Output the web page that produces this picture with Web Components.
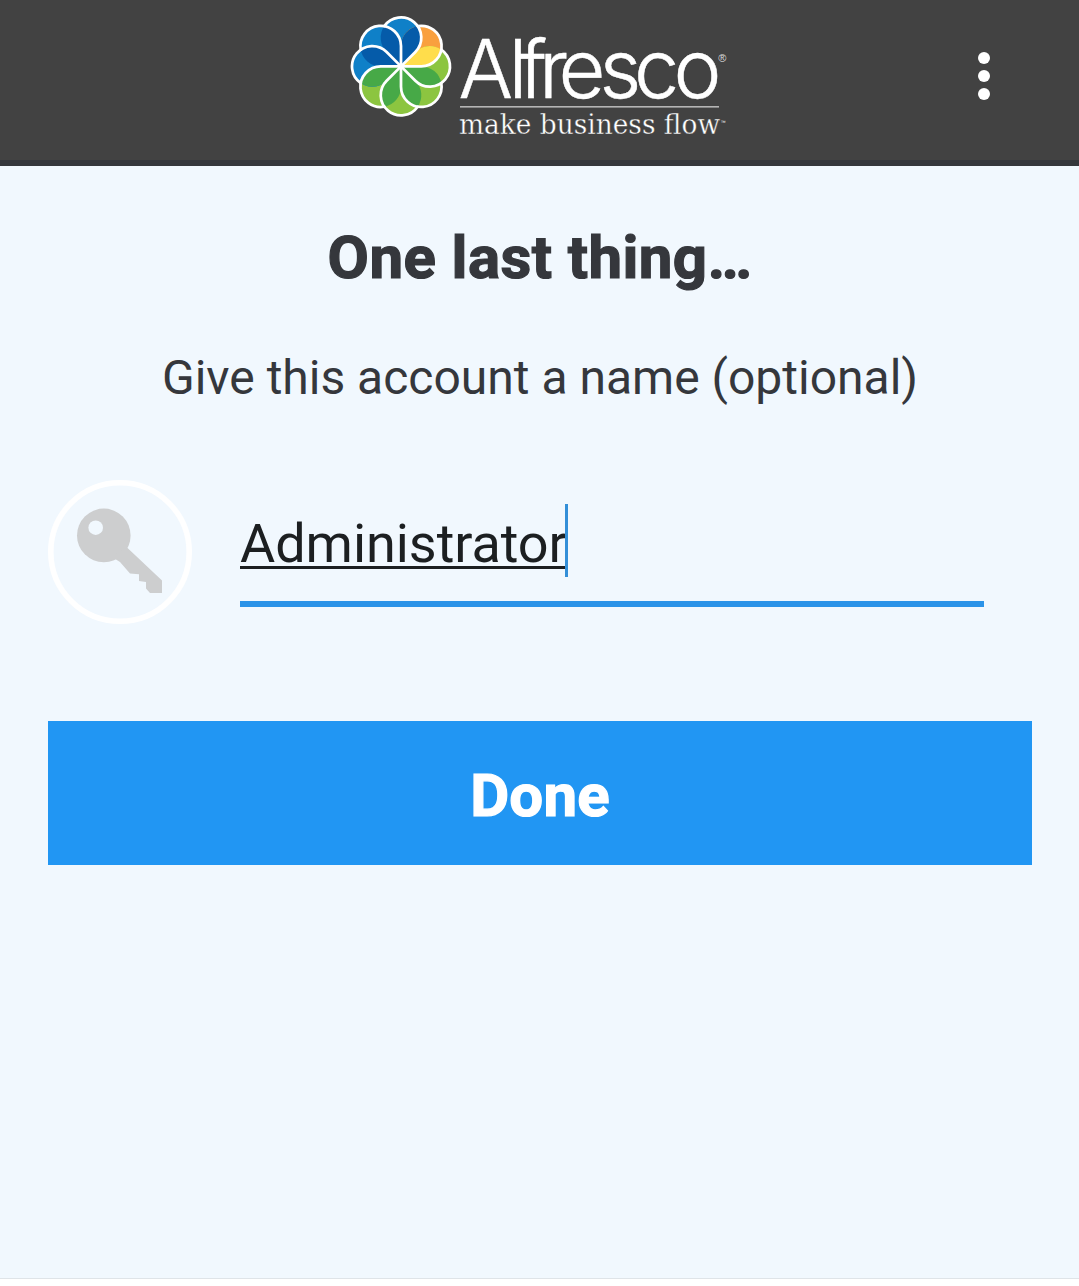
<!DOCTYPE html>
<html lang="en">
<head>
<meta charset="utf-8">
<title>Alfresco</title>
<style>
html, body { margin: 0; height: 100%; }
body { font-family: Roboto, "Liberation Sans", sans-serif; background: #fff; overflow: hidden; }
</style>
</head>
<body>
<account-screen></account-screen>
<script>
class BrandLogo extends HTMLElement {
  connectedCallback() {
    // Petals run clockwise from north; each laps over its clockwise neighbour.
    const blue = ['#0f80c8', '#055ba9'], green = ['#8cc540', '#47a947'];
    const colours = [blue, ['#f9a03e', '#ffdd4b'], green, green, green, green, blue, blue];
    const layer = draw => colours.map((c, i) => `<g transform="rotate(${i * 45})">${draw(c)}</g>`).join('');
    const petals = layer(c => `<path fill="${c[0]}" d="M0 0L14.14-14.14A20 20 0 1 0-14.14-14.14Z"/>`);
    const laps = layer(c => `<path fill="${c[1]}" d="M0 0V-20A20 20 0 0 1 16.44-39.68A20 20 0 0 1 14.14-14.14Z"/>`);
    const edges = layer(() => `<path d="M0 0L14.14-14.14A20 20 0 1 0-16.44-39.68"/>`);
    this.attachShadow({ mode: 'open' }).innerHTML = `
<style>:host{display:block;width:380px;height:130px}svg{display:block}</style>
<svg width="380" height="130" viewBox="350 10 380 130" fill="#fff" role="img">
<g transform="translate(401 66.4) scale(1.015)">${petals}${laps}<g fill="none" stroke="#fff" stroke-width="2.7" stroke-linejoin="round" stroke-linecap="round">${edges}</g><circle r="2.8"/></g>
<text x="458.5 508.5 519 539 558.5 599.5 634 673.5" y="97.7" font-family="Inter" font-weight="300" font-size="81" stroke="#fff" stroke-width=".5">Alfresco</text>
<text x="718.3" y="61.5" font-family="Liberation Sans" font-size="11" fill="#ddd">®</text>
<rect x="460" y="106" width="259" height="1.6" fill="#b5b5b5"/>
<text x="459" y="134.3" font-family="DejaVu Serif" font-size="27" textLength="261" lengthAdjust="spacingAndGlyphs" stroke="#424242" stroke-width=".35">make business flow</text>
<text x="720.8" y="124" font-family="Liberation Sans" font-size="5">™</text>
</svg>`;
  }
}
class OverflowMenu extends HTMLElement {
  connectedCallback() {
    this.attachShadow({ mode: 'open' }).innerHTML = `
<style>:host{display:flex;flex-direction:column;gap:6px}i{width:12px;height:12px;border-radius:50%;background:#fff}</style><i></i><i></i><i></i>`;
  }
}
class AppHeader extends HTMLElement {
  connectedCallback() {
    this.attachShadow({ mode: 'open' }).innerHTML = `
<style>:host{display:grid;grid-template-columns:350px 380px 1fr;box-sizing:border-box;height:166px;padding-top:10px;background:#424242;border-bottom:6px solid #35373c}
brand-logo{grid-column:2}overflow-menu{margin:42px 0 0 248px}</style>
<brand-logo></brand-logo><overflow-menu></overflow-menu>`;
  }
}
class AccountIcon extends HTMLElement {
  connectedCallback() {
    this.attachShadow({ mode: 'open' }).innerHTML = `
<style>:host{display:block;flex:none;width:144px;height:144px}svg{display:block}</style>
<svg width="144" height="144" viewBox="0 0 144 144"><circle cx="72" cy="72" r="69.2" fill="none" stroke="#fff" stroke-width="5.6"/>
<g fill="#cdcecf"><circle cx="55.8" cy="55.4" r="26.8"/><path d="M79 67.5L114 100.5V113H102L98 108.5V102L91 101V94.3L82 93.5L72 82L64 77Z"/></g><circle cx="47.7" cy="47.7" r="7.3" fill="#f1f8fe"/></svg>`;
  }
}
class NameField extends HTMLElement {
  connectedCallback() {
    this.attachShadow({ mode: 'open' }).innerHTML = `
<style>:host{display:block;box-sizing:border-box;width:744px;height:103px;border-bottom:6px solid #2b93e8;color:#1c1f21;font-size:54px}
.row{display:flex}.value{border-bottom:3px solid #1c1f21;height:62px;width:326px;line-height:80px;letter-spacing:-.05px;white-space:nowrap}
.caret{width:3px;height:73px;margin-left:-1px;background:#338fd8}</style>
<div class="row"><span class="value"><slot></slot></span><span class="caret"></span></div>`;
  }
}
class DoneButton extends HTMLElement {
  connectedCallback() {
    this.attachShadow({ mode: 'open' }).innerHTML = `
<style>:host{display:block}button{display:block;width:100%;height:144px;padding:5px 0 0;border:0;background:#2196f3;color:#fff;font:bold 60px Roboto,sans-serif;letter-spacing:.2px;-webkit-text-stroke:1.2px #fff}</style>
<button><slot></slot></button>`;
  }
}
class AccountScreen extends HTMLElement {
  connectedCallback() {
    this.attachShadow({ mode: 'open' }).innerHTML = `
<style>:host{display:block;box-sizing:border-box;height:1279px;background:#f1f8fe;border-bottom:1px solid #dfe4e8;color:#35373c}
main{padding:0 47px 0 48px;text-align:center}
h1{margin:0;padding-top:57px;font-size:60px;line-height:70px;letter-spacing:.42px;-webkit-text-stroke:1.2px #35373c}
p{margin:0;padding-top:57px;font-size:48px;line-height:56px}
.field{display:flex;gap:48px;padding-top:74px;text-align:left}
name-field{margin-top:24px}
done-button{margin-top:97px}</style>
<app-header></app-header>
<main><h1>One last thing…</h1><p>Give this account a name (optional)</p>
<div class="field"><account-icon></account-icon><name-field>Administrator</name-field></div>
<done-button>Done</done-button></main>`;
  }
}
customElements.define('brand-logo', BrandLogo);
customElements.define('overflow-menu', OverflowMenu);
customElements.define('app-header', AppHeader);
customElements.define('account-icon', AccountIcon);
customElements.define('name-field', NameField);
customElements.define('done-button', DoneButton);
customElements.define('account-screen', AccountScreen);
</script>
</body>
</html>
